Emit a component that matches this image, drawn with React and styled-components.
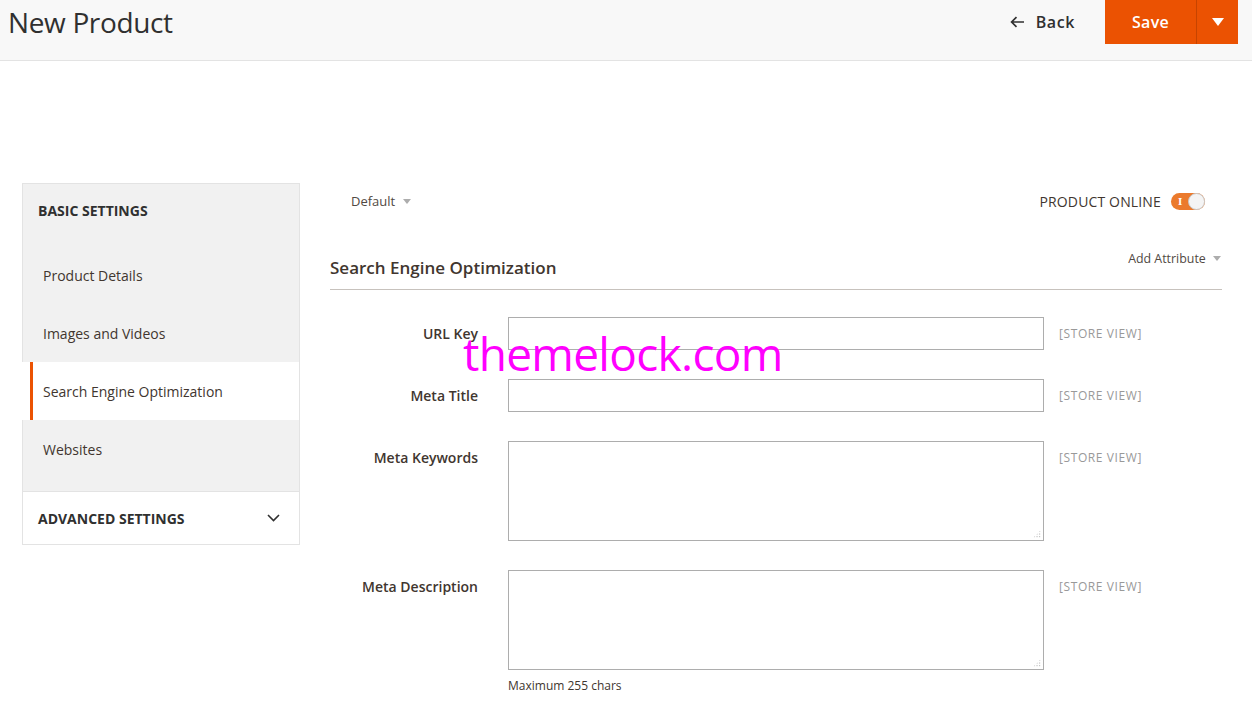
import React from 'react'
import styled, { createGlobalStyle } from 'styled-components'

const GlobalStyle = createGlobalStyle`
  html, body {
    margin: 0;
    padding: 0;
    background: #fff;
  }
  body {
    font-family: 'Open Sans', 'Liberation Sans', sans-serif;
    color: #303030;
  }
  * { box-sizing: border-box; }
`

const navItems = [
  { label: 'Product Details' },
  { label: 'Images and Videos' },
  { label: 'Search Engine Optimization', active: true },
  { label: 'Websites' },
]

const fields = [
  { label: 'URL Key', kind: 'input' },
  { label: 'Meta Title', kind: 'input' },
  { label: 'Meta Keywords', kind: 'textarea' },
  { label: 'Meta Description', kind: 'textarea', note: 'Maximum 255 chars' },
]

const ArrowLeft = () => (
  <svg width="15" height="12" viewBox="0 0 15 12">
    <path d="M14 6H2M6.5 1.2L1.6 6l4.9 4.8" fill="none" stroke="#303030" strokeWidth="1.7" />
  </svg>
)

const Chevron = () => (
  <svg width="13" height="8" viewBox="0 0 13 8">
    <path d="M1 1l5.5 5.5L12 1" fill="none" stroke="#303030" strokeWidth="1.6" />
  </svg>
)

const App = () => {
  return (
    <>
      <GlobalStyle />
      <Header>
        <Title>New Product</Title>
        <Actions>
          <BackButton>
            <ArrowLeft />
            <span>Back</span>
          </BackButton>
          <SaveGroup>
            <SaveButton>Save</SaveButton>
            <SaveToggle>
              <Caret />
            </SaveToggle>
          </SaveGroup>
        </Actions>
      </Header>

      <Page>
        <Sidebar>
          <NavHeader>Basic Settings</NavHeader>
          <NavList>
            {navItems.map((item) => (
              <NavItem key={item.label} active={item.active}>
                {item.label}
              </NavItem>
            ))}
          </NavList>
          <NavHeader collapsed>
            Advanced Settings
            <Chevron />
          </NavHeader>
        </Sidebar>

        <Main>
          <TopRow>
            <ScopeSwitch>
              Default <SmallCaret />
            </ScopeSwitch>
            <OnlineSwitch>
              Product Online
              <Toggle>
                <ToggleMark>I</ToggleMark>
                <Knob />
              </Toggle>
            </OnlineSwitch>
          </TopRow>

          <SectionHeader>
            <SectionTitle>Search Engine Optimization</SectionTitle>
            <AddAttribute>
              Add Attribute <SmallCaret />
            </AddAttribute>
          </SectionHeader>

          <Form>
            {fields.map((f) => (
              <FieldRow key={f.label}>
                <Label>{f.label}</Label>
                <Control>
                  {f.kind === 'input' ? (
                    <TextInput type="text" />
                  ) : (
                    <AreaWrap>
                      <TextArea />
                      <Grip />
                    </AreaWrap>
                  )}
                  {f.note && <Note>{f.note}</Note>}
                </Control>
                <Scope>[STORE VIEW]</Scope>
              </FieldRow>
            ))}
          </Form>

          <Watermark>themelock.com</Watermark>
        </Main>
      </Page>
    </>
  )
}

const Header = styled.header`
  height: 61px;
  background: #f8f8f8;
  border-bottom: 1px solid #e3e3e3;
  display: flex;
  justify-content: space-between;
  align-items: flex-start;
  padding: 0 14px 0 8px;
`

const Title = styled.h1`
  margin: 0;
  font-size: 28px;
  font-weight: 400;
  line-height: 44px;
  color: #303030;
  letter-spacing: -0.35px;
`

const Actions = styled.div`
  display: flex;
  align-items: flex-start;
`

const BackButton = styled.div`
  display: flex;
  align-items: center;
  gap: 11px;
  height: 44px;
  padding-right: 30px;
  font-size: 16px;
  font-weight: 600;
  letter-spacing: 0.6px;
  color: #303030;
`

const SaveGroup = styled.div`
  display: flex;
  height: 44px;
  background: #eb5202;
`

const SaveButton = styled.div`
  width: 92px;
  display: flex;
  align-items: center;
  justify-content: center;
  color: #fff;
  font-size: 16px;
  font-weight: 600;
  letter-spacing: 0.3px;
  border-right: 1px solid #c74400;
`

const SaveToggle = styled.div`
  width: 41px;
  display: flex;
  align-items: center;
  justify-content: center;
`

const Caret = styled.span`
  width: 0;
  height: 0;
  border-left: 6px solid transparent;
  border-right: 6px solid transparent;
  border-top: 8px solid #fff;
`

const SmallCaret = styled.span`
  display: inline-block;
  width: 0;
  height: 0;
  margin-left: 4px;
  vertical-align: 2px;
  border-left: 4px solid transparent;
  border-right: 4px solid transparent;
  border-top: 5px solid #adadad;
`

const Page = styled.div`
  display: flex;
  align-items: flex-start;
  gap: 30px;
  padding: 122px 30px 40px 22px;
`

const Sidebar = styled.nav`
  width: 278px;
  flex-shrink: 0;
`

const NavHeader = styled.div`
  height: 54px;
  display: flex;
  align-items: center;
  justify-content: space-between;
  padding: 0 19px 0 15px;
  border: 1px solid #e3e3e3;
  background: ${(p) => (p.collapsed ? '#fff' : '#f1f1f1')};
  font-size: 14px;
  font-weight: 700;
  text-transform: uppercase;
  color: #303030;
`

const NavList = styled.div`
  background: #f1f1f1;
  border-left: 1px solid #e3e3e3;
  border-right: 1px solid #e3e3e3;
  padding: 10px 0 13px;
  margin-top: -1px;
`

const NavItem = styled.div`
  position: relative;
  height: 58px;
  display: flex;
  align-items: center;
  font-size: 14px;
  color: #41362f;
  background: ${(p) => (p.active ? '#fff' : 'transparent')};
  margin-left: ${(p) => (p.active ? '-1px' : '0')};
  padding-left: ${(p) => (p.active ? '21px' : '20px')};

  &::before {
    content: '';
    display: ${(p) => (p.active ? 'block' : 'none')};
    position: absolute;
    left: 8px;
    top: 0;
    bottom: 0;
    width: 3px;
    background: #eb5202;
  }
`

const Main = styled.main`
  position: relative;
  flex: 1;
`

const TopRow = styled.div`
  height: 36px;
  display: flex;
  align-items: center;
  justify-content: space-between;
  padding: 0 17px 0 21px;
`

const ScopeSwitch = styled.div`
  font-size: 13px;
  color: #514943;
`

const OnlineSwitch = styled.div`
  display: flex;
  align-items: center;
  gap: 10px;
  font-size: 14px;
  text-transform: uppercase;
  color: #41362f;
  letter-spacing: 0.15px;
`

const Toggle = styled.div`
  position: relative;
  width: 34px;
  height: 17px;
  border-radius: 9px;
  background: #eb7a2c;
  display: flex;
  align-items: center;
`

const ToggleMark = styled.span`
  color: #fff;
  font-family: 'Liberation Serif', serif;
  font-weight: 700;
  font-size: 11px;
  line-height: 1;
  margin-left: 7px;
`

const Knob = styled.span`
  position: absolute;
  right: 0;
  top: 0;
  width: 17px;
  height: 17px;
  border-radius: 50%;
  background: #f4f4f4;
  border: 1px solid #c9c9c9;
`

const SectionHeader = styled.div`
  display: flex;
  justify-content: space-between;
  align-items: flex-start;
  padding: 37px 0 9px;
  border-bottom: 1px solid #c7c2bd;
`

const SectionTitle = styled.h2`
  margin: 0;
  font-size: 17px;
  font-weight: 600;
  line-height: 24px;
  color: #41362f;
`

const AddAttribute = styled.div`
  margin-top: -6px;
  padding-right: 1px;
  font-size: 12.4px;
  line-height: 18px;
  color: #514943;
`

const Form = styled.div`
  display: flex;
  flex-direction: column;
  gap: 29px;
  padding-top: 27px;
`

const FieldRow = styled.div`
  display: grid;
  grid-template-columns: 148px 536px auto;
  column-gap: 30px;
  align-items: start;
`

const Label = styled.div`
  text-align: right;
  font-size: 14px;
  font-weight: 600;
  line-height: 33px;
  color: #41362f;
`

const Control = styled.div`
  display: flex;
  flex-direction: column;
`

const TextInput = styled.input`
  width: 536px;
  height: 33px;
  border: 1px solid #adadad;
  background: #fff;
  padding: 0 10px;
  font: inherit;
  outline: none;
`

const AreaWrap = styled.div`
  position: relative;
  width: 536px;
  height: 100px;
`

const TextArea = styled.textarea`
  display: block;
  width: 100%;
  height: 100%;
  border: 1px solid #adadad;
  background: #fff;
  resize: none;
  font: inherit;
  outline: none;
`

const Grip = styled.span`
  position: absolute;
  right: 3px;
  bottom: 3px;
  width: 8px;
  height: 8px;
  background-image: radial-gradient(circle, #9a9a9a 0.6px, transparent 0.9px);
  background-size: 2.7px 2.7px;
  clip-path: polygon(100% 0, 100% 100%, 0 100%);
`

const Note = styled.div`
  margin-top: 8px;
  font-size: 12px;
  line-height: 16px;
  color: #41362f;
`

const Scope = styled.div`
  margin-left: -15px;
  font-size: 12px;
  line-height: 33px;
  letter-spacing: 0.6px;
  color: #999;
  white-space: nowrap;
`

const Watermark = styled.div`
  position: absolute;
  left: 133px;
  top: 143px;
  font-family: 'Open Sans', sans-serif;
  font-size: 46px;
  line-height: 54px;
  color: #ff00ff;
  pointer-events: none;
  letter-spacing: -0.7px;
`

export default App
